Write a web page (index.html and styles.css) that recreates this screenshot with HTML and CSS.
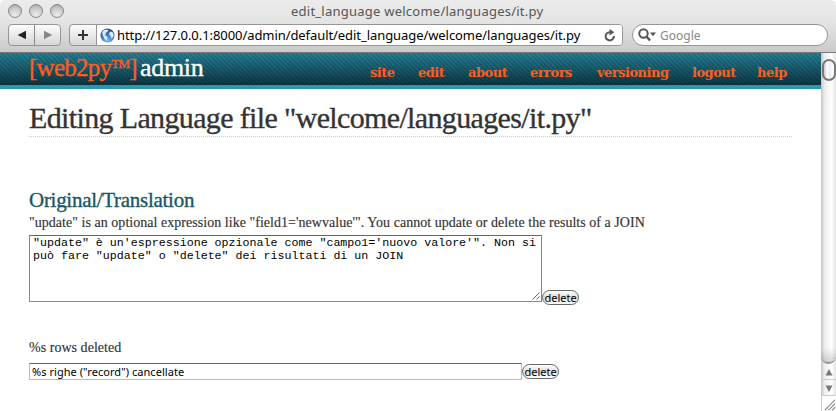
FILE: index.html
```html
<!DOCTYPE html>
<html lang="en">
<head>
<meta charset="utf-8">
<title>edit_language welcome/languages/it.py</title>
<link rel="stylesheet" href="styles.css">
</head>
<body>
<div class="window">
  <header class="chrome">
    <div class="titlebar">
      <div class="lights"><i></i><i></i><i></i></div>
      <span class="window-title">edit_language welcome/languages/it.py</span>
    </div>
    <div class="toolbar">
      <div class="nav-buttons">
        <span><svg width="10" height="10" viewBox="0 0 10 10"><path d="M9 .7v8.6L.7 5z" fill="#222"/></svg></span>
        <span><svg width="10" height="10" viewBox="0 0 10 10"><path d="M1 .7v8.6L9.3 5z" fill="#888"/></svg></span>
      </div>
      <div class="address">
        <span class="add"><svg width="12" height="12" viewBox="0 0 12 12"><path d="M6 1v10M1 6h10" stroke="#333" stroke-width="2"/></svg></span>
        <div class="url">
          <svg class="globe" width="15" height="15" viewBox="0 0 15 15"><defs><radialGradient id="g" cx=".5" cy=".85" r=".8"><stop offset="0" stop-color="#76c5f0"/><stop offset=".6" stop-color="#2d70bd"/><stop offset="1" stop-color="#234f8c"/></radialGradient></defs><circle cx="7.5" cy="7.5" r="7" fill="url(#g)"/><path d="M2 4.5 4 2l3-.6L8.500 2.500 7 4 5.500 5 6 6.500 4 6.800 6.500 8 7.500 10 6 13 4.500 10.500 3 8zM10 3.500l3 1 .8 3-2 3.500-1.300-3L9 6z" fill="#dcebf5"/></svg>
          <span class="url-text">http://127.0.0.1:8000/admin/default/edit_language/welcome/languages/it.py</span>
          <svg class="reload" width="12" height="13" viewBox="0 0 12 13"><path d="M9.800 6.800A4.100 4.100 0 1 1 5.800 3.200" fill="none" stroke="#555" stroke-width="2"/><path d="M5.500 0v6.400L10.300 3.200z" fill="#555"/></svg>
        </div>
      </div>
      <div class="search">
        <svg width="19" height="14" viewBox="0 0 19 14"><circle cx="5.500" cy="5.500" r="4.200" fill="none" stroke="#555" stroke-width="2"/><path d="M8.500 8.500 12 12.500" stroke="#555" stroke-width="2.400"/><path d="M12 4.500h6L15 8.200z" fill="#555"/></svg>
        <span>Google</span>
      </div>
    </div>
  </header>
  <div class="viewport">
    <div class="page">
      <div class="site-header">
        <div class="logo"><span class="brand">[web2py<sup>TM</sup>]</span><span class="admin">admin</span></div>
        <nav><a class="n1">site</a><a class="n2">edit</a><a class="n3">about</a><a class="n4">errors</a><a class="n5">versioning</a><a class="n6">logout</a><a class="n7">help</a></nav>
      </div>
      <main>
        <h1><span>Editing Language file "welcome/languages/it.py"</span></h1>
        <h2>Original/Translation</h2>
        <p class="source first">"update" is an optional expression like "field1='newvalue'". You cannot update or delete the results of a JOIN</p>
        <div class="entry">
          <div class="area">"update" è un'espressione opzionale come "campo1='nuovo valore'". Non si<br>può fare "update" o "delete" dei risultati di un JOIN<svg class="grip" width="8" height="8" viewBox="0 0 8 8"><path d="M.5 7.500l7-7M4.500 7.500l3-3" stroke="#555" stroke-width=".9"/></svg></div>
          <button class="low">delete</button>
        </div>
        <p class="source second">%s rows deleted</p>
        <div class="entry">
          <div class="field">%s righe ("record") cancellate</div>
          <button>delete</button>
        </div>
      </main>
    </div>
    <aside class="scrollbar">
      <div class="track"><div class="thumb"></div><div class="lane"></div></div>
      <div class="arrow"><svg width="8" height="7" viewBox="0 0 8 7"><path d="M4 0l3.500 6.500h-7z" fill="#777"/></svg></div>
      <div class="arrow"><svg width="8" height="7" viewBox="0 0 8 7"><path d="M4 7L.5.5h7z" fill="#777"/></svg></div>
      <div class="corner"><svg width="15" height="14" viewBox="0 0 15 14"><path d="M3 13.500l11-11M7 13.500l7-7M11 13.500l3-3" stroke="#888" stroke-width="1.200"/></svg></div>
    </aside>
  </div>
</div>
</body>
</html>
```
FILE: styles.css
```css
* { box-sizing: border-box; }
body { margin: 0; background: #fff; font-family: "Liberation Serif", serif; }
.window { width: 836px; height: 411px; overflow: hidden; display: flex; flex-direction: column; }
.chrome { height: 53px; background: linear-gradient(#ececec, #e3e3e3 24px, #cacaca); border-bottom: 1px solid #777; border-radius: 5px 5px 0 0; font-family: "Noto Sans", sans-serif; }
.titlebar { height: 24px; display: flex; align-items: center; }
.lights { display: flex; gap: 7px; padding-left: 8px; width: 291px; margin-top: -2px; }
.lights i { width: 14px; height: 14px; border-radius: 50%; border: 1px solid #888; background: radial-gradient(circle at 50% 85%, #eee, #c5c5c5 65%, #999); }
.window-title { font-size: 13px; color: #555; letter-spacing: .24px; white-space: nowrap; margin-top: -2px; }
.toolbar { display: flex; padding-left: 8px; }
.nav-buttons, .address { display: flex; height: 22px; border: 1px solid #969696; border-radius: 4px; background: linear-gradient(#fdfdfd, #d6d6d6); }
.nav-buttons { width: 53px; }
.nav-buttons span { flex: 1; display: flex; align-items: center; justify-content: center; }
.nav-buttons span + span { border-left: 1px solid #888; }
.address { width: 554px; margin-left: 8px; }
.add { width: 27px; display: flex; align-items: center; justify-content: center; border-right: 1px solid #969696; }
.url { flex: 1; display: flex; align-items: center; background: #fff; border-radius: 0 3px 3px 0; padding: 0 6px 0 3px; }
.url-text { flex: 1; margin-left: 2px; font-size: 13px; color: #000; white-space: nowrap; letter-spacing: -.07px; }
.search { display: flex; align-items: center; width: 196px; height: 22px; margin-left: 9px; padding-left: 5px; border: 1px solid #969696; border-radius: 11px; background: #fff; color: #888; font-size: 12px; gap: 3px; }
.viewport { flex: 1; display: flex; min-height: 0; }
.page { width: 821px; }
.site-header { height: 36px; display: flex; align-items: flex-start; background: repeating-linear-gradient(45deg, rgba(0,0,0,.14) 0 1.500px, transparent 1.500px 3.300px), linear-gradient(#258096, #0c3440 32px); background-clip: padding-box; border-bottom: 4px solid #2798ae; padding-left: 29px; }
.logo { display: flex; width: 341px; font-size: 25px; line-height: 30px; white-space: nowrap; }
.brand { color: #ff5c1f; letter-spacing: -.75px; width: 111px; -webkit-text-stroke: .35px; }
.brand sup { font-size: 13px; line-height: 0; vertical-align: 8px; }
.admin { color: #fff; font-size: 26px; letter-spacing: -.3px; -webkit-text-stroke: .35px; }
nav { display: flex; color: #ff5c1f; font: bold 13px/40px "DejaVu Serif", serif; letter-spacing: -.5px; }
nav a { white-space: nowrap; height: 32px; }
.n1 { width: 48px; } .n2 { width: 50px; } .n3 { width: 62px; } .n4 { width: 67px; }
.n5 { width: 95px; } .n6 { width: 65px; }
main { padding: 0 29px; color: #333; }
h1 { margin: 12px 0 0; height: 36px; border-bottom: 1px dotted #ccc; font-weight: 400; font-size: 30px; line-height: 34px; letter-spacing: -.64px; white-space: nowrap; -webkit-text-stroke: .35px; }
h2 { margin: 51px 0 0; height: 26px; color: #185766; font-weight: 400; font-size: 21px; line-height: 25px; letter-spacing: -.28px; -webkit-text-stroke: .35px; }
p { margin: 0; }
.source { font-size: 14px; line-height: 18px; white-space: nowrap; letter-spacing: .035px; -webkit-text-stroke: .15px; }
.first { height: 21px; }
.second { margin-top: 37px; height: 24px; }
.entry { display: flex; align-items: flex-end; height: 67px; }
.second + .entry { height: 17px; }
.area { position: relative; width: 513px; height: 67px; border: 1px solid #888; border-top-color: #666; padding: 0 3px; color: #000; font: 11.650px/13px "Liberation Mono", monospace; white-space: nowrap; }
.grip { position: absolute; right: 1px; bottom: 1px; }
.field { width: 493px; height: 17px; border: 1px solid #bbb; border-top: 1px solid #666; color: #000; padding-left: 2px; font: 11px/16px "Noto Sans", sans-serif; letter-spacing: .05px; }
button { width: 37px; height: 15px; margin: 0 0 1px; padding: 0; border: 1px solid #666; border-radius: 8px; background: linear-gradient(#fff, #ddd 50%, #fff); color: #000; font: 11px/12px "Noto Sans", sans-serif; }
.low { margin-bottom: -3px; }
.scrollbar { width: 15px; display: flex; flex-direction: column; background: linear-gradient(90deg, #c4c4c4, #eee 25%, #fff 70%, #e4e4e4); }
.track { height: 311px; padding-top: 6px; display: flex; flex-direction: column; border-bottom: 2px solid #999; border-radius: 0 0 8px 8px; background: linear-gradient(transparent 295px, rgba(0,0,0,.16)); }
.thumb { height: 22px; margin-left: 1px; border: 2px solid #777; border-radius: 7px; background: linear-gradient(90deg, #ccc, #fff 35%, #eee 50%, #fff); }
.lane { flex: 1; }
.arrow { height: 16px; display: flex; align-items: center; justify-content: center; border-bottom: 1px solid #ccc; }
.arrow svg { position: relative; top: 1px; }
.corner { flex: 1; display: flex; align-items: flex-end; background: #fff; border-left: 1px solid #ccc; }
```
